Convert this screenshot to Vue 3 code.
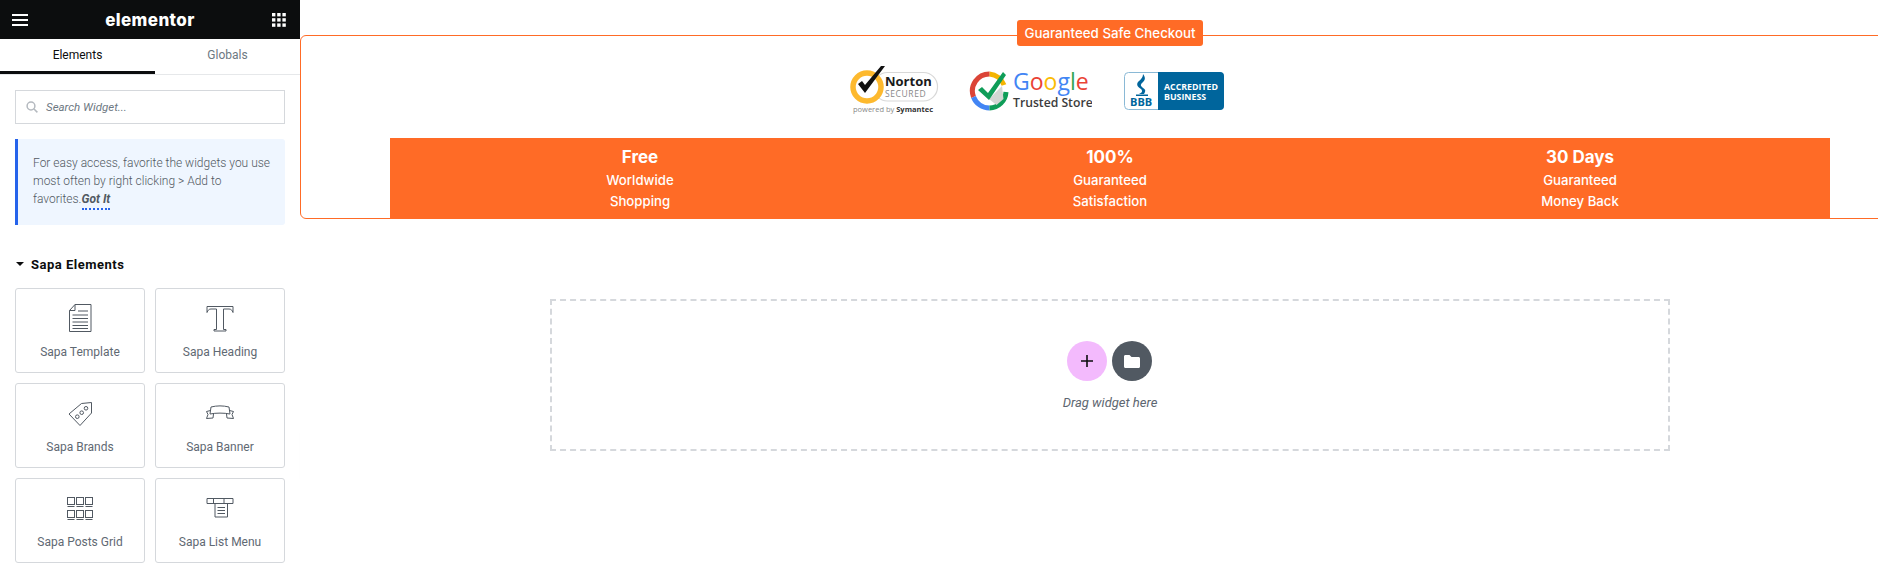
<template>
  <div class="editor">
    <aside class="panel">
      <header class="panel-head">
        <svg class="burger" width="16" height="12" viewBox="0 0 16 12"><path d="M0 1h17M0 6h17M0 11h17" stroke="#fff" stroke-width="2" /></svg>
        <span class="brand">elementor</span>
        <svg class="apps" width="14" height="14" viewBox="0 0 14 14">
          <g fill="#fff">
            <rect v-for="c in appDots" :key="c.k" :x="c.x" :y="c.y" width="3.4" height="3.4" />
          </g>
        </svg>
      </header>

      <nav class="tabs">
        <div class="tab active">Elements</div>
        <div class="tab">Globals</div>
      </nav>

      <div class="search">
        <svg width="12" height="12" viewBox="0 0 12 12" fill="none" stroke="#b4b9bf" stroke-width="1.5"><circle cx="5" cy="5" r="3.9" /><path d="M8 8l3.4 3.4" /></svg>
        <span>Search Widget...</span>
      </div>

      <div class="notice">
        For easy access, favorite the widgets you use most often by right clicking &gt; Add to favorites.<a class="got">Got It</a>
      </div>

      <div class="section-title"><i class="caret"></i>Sapa Elements</div>

      <div class="widgets">
        <div class="widget">
          <svg class="wicon" width="40" height="40" viewBox="0 0 40 40" fill="none">
            <path d="M15 6.500h16v27H9.500V12.500zM15 6.500v6H9.500" />
            <path d="M18 13h10M12.500 17h15.500M12.500 20.500h15.500M12.500 24h15.500M12.500 27.500h15.500M12.500 30.500h15.500" />
          </svg>
          <span>Sapa Template</span>
        </div>
        <div class="widget">
          <svg class="wicon" width="40" height="40" viewBox="0 0 40 40" fill="none">
            <path d="M7 8.500h26v6c-1-2.500-2-3.500-4-3.500h-5.500v20.500H26V33H14v-1.500h2.500V11H11c-2 0-3 1-4 3.500z" />
          </svg>
          <span>Sapa Heading</span>
        </div>
        <div class="widget">
          <svg class="wicon" width="40" height="40" viewBox="0 0 40 40" fill="none">
            <path d="M21.500 10.500l10-1V20L20 32.500 9 21z" />
            <circle cx="17.300" cy="23.700" r="1.800" />
            <circle cx="21.700" cy="19.700" r="1.800" />
            <circle cx="26" cy="15.300" r="1.800" />
          </svg>
          <span>Sapa Brands</span>
        </div>
        <div class="widget">
          <svg class="wicon" width="40" height="40" viewBox="0 0 40 40" fill="none">
            <path d="M11 14c6-1.500 12-1.500 18 0l1 7c-6-1.200-14-1.200-20 0z" />
            <path d="M10.500 17.500l-4 1 1.500 3-1.500 4 6.500-.5.500-4M29.500 17.500l4 1-1.500 3 1.500 4-6.500-.5-.5-4" />
          </svg>
          <span>Sapa Banner</span>
        </div>
        <div class="widget">
          <svg class="wicon" width="40" height="40" viewBox="0 0 40 40" fill="none">
            <g v-for="c in gridCells" :key="c.k">
              <rect :x="c.x" :y="c.y" width="7" height="7" />
              <path :d="`M${c.x} ${c.y + 9}h7`" />
            </g>
          </svg>
          <span>Sapa Posts Grid</span>
        </div>
        <div class="widget">
          <svg class="wicon" width="40" height="40" viewBox="0 0 40 40" fill="none">
            <path d="M7 10.500h26v5H7zM13.500 10.500v5M24 10.500v5" />
            <path d="M15 15.500V29h12.500V15.500" />
            <path d="M17.500 19.500h7.500M17.500 22.500h7.500M17.500 25.500h7.500" />
          </svg>
          <span>Sapa List Menu</span>
        </div>
      </div>

      <button class="collapse">
        <svg width="6" height="10" viewBox="0 0 6 10" fill="none" stroke="#515962" stroke-width="1.500"><path d="M5 1L1 5l4 4" /></svg>
      </button>
    </aside>

    <main class="canvas">
      <section class="checkout">
        <div class="badge">Guaranteed Safe Checkout</div>

        <div class="logos">
          <svg class="logo" width="92" height="52" viewBox="0 0 92 52">
            <rect x="23.500" y="7.500" width="64" height="28.500" rx="14" fill="#fff" stroke="#d8d8d8" stroke-width="1.200" />
            <circle cx="17" cy="22" r="14" fill="#fff" stroke="#fdb92e" stroke-width="5.500" />
            <path d="M8 19l4-3 3 4L31 1h4L15 28z" fill="#111" />
            <text x="35" y="21" class="norton">Norton</text>
            <text x="35" y="32" class="secured">SECURED</text>
            <text x="3" y="47" class="powered">powered by <tspan class="symantec">Symantec</tspan></text>
          </svg>

          <svg class="logo" width="124" height="52" viewBox="0 0 124 52">
            <g transform="translate(0 4)">
              <path d="M21.500 5A17 17 0 0 1 36 16" fill="none" stroke="#f4b400" stroke-width="5" />
              <path d="M5.500 28A17 17 0 0 1 21.500 5" fill="none" stroke="#db4437" stroke-width="5" />
              <path d="M5.500 28A17 17 0 0 0 21.500 39" fill="none" stroke="#4285f4" stroke-width="5" />
              <path d="M21.500 39A17 17 0 0 0 38 23" fill="none" stroke="#0f9d58" stroke-width="5" />
              <path d="M21 30l13-13 1.500 13-7 6z" fill="#d3d6d3" />
              <path d="M10 21l4-3 6 6L35 3l3 3-17 25z" fill="#0f9d58" />
              <text x="45" y="21" class="google">
                <tspan fill="#4285f4">G</tspan><tspan fill="#ea4335">o</tspan><tspan fill="#fbbc05">o</tspan><tspan fill="#4285f4">g</tspan><tspan fill="#34a853">l</tspan><tspan fill="#ea4335">e</tspan>
              </text>
              <text x="45" y="38" class="trusted">Trusted Store</text>
            </g>
          </svg>

          <svg class="logo" width="100" height="38" viewBox="0 0 100 38">
            <rect x=".500" y=".500" width="99" height="37" rx="4" fill="#fff" stroke="#8ab9d6" />
            <path d="M34 0h62a4 4 0 0 1 4 4v30a4 4 0 0 1-4 4H34z" fill="#00659c" />
            <path d="M19 2c2 3 3 5 0 8-2 2-3 3-1 5s4 2 3 5l-1 2h-5c3-1 4-3 2-5-3-2-5-4-3-7 2-2 5-4 5-8z" fill="#00659c" />
            <path d="M12 22.500h12V24H12z" fill="#00659c" />
            <text x="6" y="34" class="bbb">BBB</text>
            <text x="40" y="18" class="accredited">ACCREDITED</text>
            <text x="40" y="28" class="accredited">BUSINESS</text>
          </svg>
        </div>

        <div class="perks">
          <div v-for="p in perks" :key="p.title" class="perk">
            <strong>{{ p.title }}</strong>
            <span>{{ p.line1 }}</span>
            <span>{{ p.line2 }}</span>
          </div>
        </div>
      </section>

      <section class="dropzone">
        <div class="drop-buttons">
          <div class="round add">
            <svg width="14" height="14" viewBox="0 0 14 14"><path d="M7 1v12M1 7h12" stroke="#0c0d0e" stroke-width="1.600" /></svg>
          </div>
          <div class="round folder">
            <svg width="16" height="13" viewBox="0 0 16 13"><path d="M0 1.500C0 .600.600 0 1.500 0h4L7.500 2h7c.9 0 1.500.6 1.500 1.500v8c0 .9-.6 1.500-1.500 1.500h-13C.6 13 0 12.400 0 11.500z" fill="#fff" /></svg>
          </div>
        </div>
        <div class="drop-text">Drag widget here</div>
      </section>
    </main>
  </div>
</template>

<script setup>
const perks = [
  { title: "Free", line1: "Worldwide", line2: "Shopping" },
  { title: "100%", line1: "Guaranteed", line2: "Satisfaction" },
  { title: "30 Days", line1: "Guaranteed", line2: "Money Back" }
];

const appDots = [];
for (let r = 0; r < 3; r++) {
  for (let c = 0; c < 3; c++) {
    appDots.push({ k: `${r}-${c}`, x: c * 5.2, y: r * 5.2 });
  }
}

const gridCells = [];
for (let r = 0; r < 2; r++) {
  for (let c = 0; c < 3; c++) {
    gridCells.push({ k: `${r}-${c}`, x: 7.500 + c * 9, y: 9.500 + r * 13 });
  }
}
</script>

<style>
html, body {
  margin: 0;
  background: #fff;
  overflow: hidden;
}
</style>

<style scoped>
.editor {
  display: flex;
  width: 1878px;
  height: 569px;
  overflow: hidden;
  font-family: Roboto, "Liberation Sans", sans-serif;
}

.panel {
  position: relative;
  flex: 0 0 300px;
  width: 300px;
  background: #fff;
  box-shadow: 0 0 8px rgba(0, 0, 0, 0.08);
}

.panel-head {
  display: flex;
  align-items: center;
  justify-content: space-between;
  height: 39px;
  padding: 0 14px 0 12px;
  background: #0c0d0e;
}
.brand {
  color: #fff;
  font-family: Inter, sans-serif;
  font-weight: 800;
  font-size: 17px;
  letter-spacing: 0.4px;
}

.tabs {
  display: flex;
  height: 35px;
  border-bottom: 1px solid #e6e8ea;
  box-sizing: content-box;
}
.tab {
  display: flex;
  align-items: center;
  justify-content: center;
  font-size: 12px;
  color: #6d7882;
  padding-bottom: 3px;
  box-sizing: border-box;
}
.tab:first-child { flex: 0 0 155px; }
.tab:last-child { flex: 1; }
.tab.active {
  color: #0c0d0e;
  border-bottom: 3px solid #0c0d0e;
  padding-bottom: 0;
}

.search {
  display: flex;
  align-items: center;
  gap: 8px;
  height: 34px;
  margin: 15px 15px 0;
  padding-left: 10px;
  border: 1px solid #d5d8dc;
  box-sizing: border-box;
  font-size: 11.500px;
  font-style: italic;
  color: #6d7882;
}

.notice {
  margin: 15px 15px 0;
  height: 86px;
  box-sizing: border-box;
  padding: 15px 15px 0 15px;
  background: #eff6ff;
  border-left: 3px solid #2563eb;
  border-radius: 0 3px 3px 0;
  font-size: 12px;
  font-weight: 300;
  line-height: 18px;
  color: #515962;
}
.got {
  font-weight: 700;
  font-style: italic;
  color: #515962;
  padding-bottom: 2px;
  border-bottom: 2px dotted #2563eb;
}

.section-title {
  display: flex;
  align-items: center;
  gap: 7px;
  margin: 30px 16px 0;
  height: 18px;
  font-size: 13px;
  font-weight: 700;
  letter-spacing: 0.5px;
  color: #0c0d0e;
}
.caret {
  width: 0;
  height: 0;
  border-left: 4px solid transparent;
  border-right: 4px solid transparent;
  border-top: 4px solid #0c0d0e;
}

.widgets {
  display: grid;
  grid-template-columns: 130px 130px;
  grid-auto-rows: 85px;
  gap: 10px;
  margin: 15px 15px 0;
}
.widget {
  display: flex;
  flex-direction: column;
  align-items: center;
  box-sizing: border-box;
  padding-top: 9px;
  border: 1px solid #d5d8dc;
  border-radius: 3px;
  font-size: 12px;
  color: #5f6973;
}
.widget span {
  margin-top: 7px;
  line-height: 14px;
}
.wicon {
  stroke: #515962;
  stroke-width: 1;
}

.collapse {
  position: absolute;
  left: 300px;
  top: 430px;
  width: 15px;
  height: 50px;
  padding: 0 0 0 3px;
  display: flex;
  align-items: center;
  justify-content: center;
  background: #fff;
  border: none;
  box-shadow: 3px 1px 5px rgba(0, 0, 0, 0.06);
}

.canvas {
  flex: 1;
  min-width: 0;
  display: flex;
  flex-direction: column;
  background: #fff;
  position: relative;
}

.checkout {
  position: relative;
  flex: none;
  width: 1620px;
  height: 184px;
  margin-top: 35px;
  box-sizing: border-box;
  background: #fff;
  border: 1px solid #ff6b26;
  border-radius: 6px;
}
.badge {
  position: absolute;
  top: -16px;
  left: 50%;
  transform: translateX(-50%);
  width: 186px;
  text-align: center;
  line-height: 26px;
  background: #ff6b26;
  border-radius: 3px;
  color: #fff;
  font-family: Inter, sans-serif;
  font-size: 13.300px;
  font-weight: 500;
  white-space: nowrap;
}

.logos {
  display: flex;
  align-items: flex-start;
  height: 102px;
  padding: 29px 0 0 549px;
  box-sizing: border-box;
  gap: 26px;
}
.logo {
  flex: none;
}
.logo:last-child { margin-top: 7px; margin-left: 6px; }
.norton { font: 700 13px "Open Sans", sans-serif; fill: #1a1a1a; }
.secured { font: 400 8.500px "Open Sans", sans-serif; letter-spacing: 0.6px; fill: #888; }
.powered { font: 400 7.500px "Open Sans", sans-serif; fill: #888; }
.symantec { font-weight: 700; fill: #333; }
.google { font: 500 23px "Open Sans", sans-serif; }
.trusted { font: 600 12.200px "Open Sans", sans-serif; fill: #3c3c3c; }
.bbb { font: 700 11px "Open Sans", sans-serif; fill: #00659c; }
.accredited { font: 700 8.800px "Open Sans", sans-serif; fill: #fff; }

.perks {
  display: grid;
  grid-template-columns: repeat(3, 1fr);
  width: 1440px;
  height: 81px;
  margin: 0 auto;
  padding: 7px 15px 0;
  box-sizing: border-box;
  background: #ff6b26;
  color: #fff;
  font-family: Inter, sans-serif;
}
.perk {
  display: flex;
  flex-direction: column;
  align-items: center;
  font-size: 13.200px;
  font-weight: 500;
  line-height: 20.500px;
}
.perk strong {
  font-size: 17px;
  line-height: 25px;
  font-weight: 700;
}

.dropzone {
  flex: none;
  width: 1120px;
  height: 152px;
  margin: 80px 0 0 250px;
  box-sizing: border-box;
  border: 2px dashed #d5d8dc;
  display: flex;
  flex-direction: column;
  align-items: center;
  padding-top: 40px;
}
.drop-buttons {
  display: flex;
  gap: 5px;
  margin-right: 2px;
}
.round {
  width: 40px;
  height: 40px;
  border-radius: 50%;
  display: flex;
  align-items: center;
  justify-content: center;
}
.add { background: #f3bafd; }
.folder { background: #515962; }
.drop-text {
  margin-top: 14px;
  font-size: 13px;
  font-style: italic;
  color: #5d6670;
}
</style>
